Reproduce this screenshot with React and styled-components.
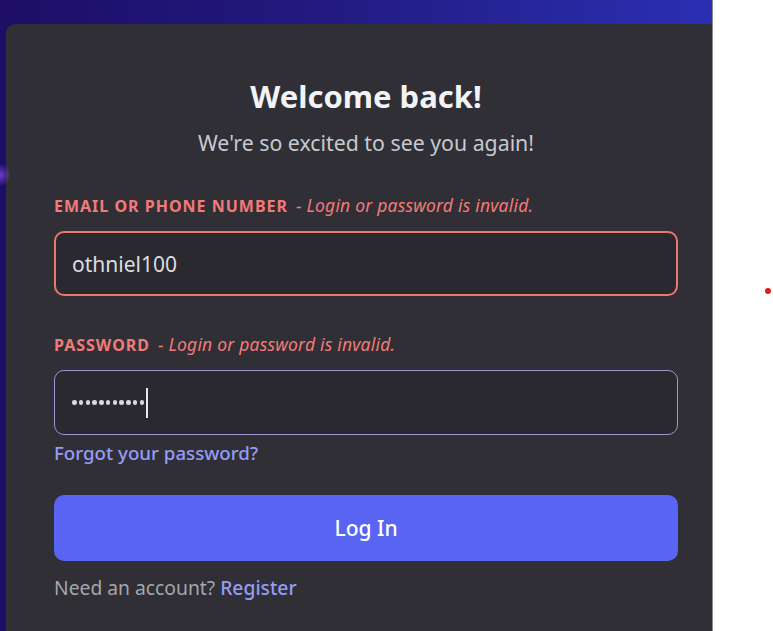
import React from "react";
import styled, { createGlobalStyle } from "styled-components";

const Global = createGlobalStyle`
  html, body { margin: 0; padding: 0; background: #ffffff; overflow: hidden; }
  * { box-sizing: border-box; }
`;

const Page = styled.div`
  display: flex;
  width: 773px;
  height: 631px;
  font-family: "Noto Sans", "Open Sans", sans-serif;
`;

const Backdrop = styled.div`
  position: relative;
  width: 713px;
  flex: none;
  display: flex;
  padding: 24px 0 0 6px;
  background: linear-gradient(90deg, #1d0d66 0%, #221a80 45%, #2a2fb2 100%);
  border-right: 1px solid #8c8c92;
  overflow: hidden;
  &::before {
    content: "";
    position: absolute;
    left: -10px;
    top: 162px;
    width: 20px;
    height: 26px;
    border-radius: 50%;
    background: radial-gradient(circle, rgba(140, 80, 255, 0.7), rgba(140, 80, 255, 0) 70%);
  }
`;

const Card = styled.main`
  flex: 1;
  background: #2f2f35;
  border-radius: 9px 0 0 0;
  padding: 48px 34px 0 48px;
  display: flex;
  flex-direction: column;
`;

const Title = styled.h1`
  margin: 6px 0 0;
  text-align: center;
  color: #f2f3f5;
  font-size: 31px;
  line-height: 36px;
  font-weight: 700;
`;

const Subtitle = styled.p`
  margin: 16px 0 0;
  text-align: center;
  color: #c7c9cf;
  font-size: 21.3px;
  line-height: 26px;
`;

const Field = styled.div`
  display: flex;
  flex-direction: column;
  margin-top: ${(p) => p.$top}px;
`;

const Label = styled.label`
  display: flex;
  align-items: baseline;
  gap: 8px;
  color: #f27a78;
  font-size: 16px;
  line-height: 20px;
  font-weight: 700;
  letter-spacing: 1px;
  text-transform: uppercase;
  margin-bottom: 15px;
`;

const ErrorText = styled.span`
  font-style: italic;
  font-weight: 400;
  font-size: 17.5px;
  text-transform: none;
  letter-spacing: 0.2px;
`;

const Input = styled.div`
  height: 65px;
  border-radius: 10px;
  background: #29292f;
  border: ${(p) => (p.$error ? "2px solid #f07470" : "1px solid #9d97d4")};
  padding: 0 ${(p) => (p.$error ? 16 : 17)}px;
  display: flex;
  align-items: center;
  color: #dcdde2;
  font-size: 21px;
`;

const Dots = styled.span`
  display: flex;
  align-items: center;
  gap: 2.25px;
`;

const Dot = styled.span`
  width: 4.5px;
  height: 4.5px;
  border-radius: 50%;
  background: #d8d9de;
`;

const Caret = styled.span`
  width: 2px;
  height: 30px;
  background: #e8e8ea;
  margin-left: 1.5px;
`;

const Link = styled.a`
  color: #949cf7;
  text-decoration: none;
  font-weight: 500;
`;

const Forgot = styled(Link)`
  margin-top: 6px;
  font-size: 18.7px;
  line-height: 24px;
  align-self: flex-start;
`;

const Button = styled.button`
  margin-top: 30px;
  height: 66px;
  border: none;
  border-radius: 10px;
  background: #5865f2;
  color: #ffffff;
  font-family: inherit;
  font-size: 21px;
  font-weight: 500;
  cursor: pointer;
`;

const Footer = styled.p`
  margin: 15px 0 0;
  color: #a4a6ad;
  font-size: 19.3px;
  line-height: 24px;
`;

const Side = styled.div`
  flex: 1;
  position: relative;
  background: #ffffff;
`;

const RedDot = styled.span`
  position: absolute;
  left: 52px;
  top: 288px;
  width: 6px;
  height: 6px;
  border-radius: 50%;
  background: #e51b1b;
`;

export default function App() {
  return (
    <>
      <Global />
      <Page>
        <Backdrop>
          <Card>
            <Title>Welcome back!</Title>
            <Subtitle>We're so excited to see you again!</Subtitle>
            <Field $top={39}>
              <Label>
                Email or Phone Number
                <ErrorText>- Login or password is invalid.</ErrorText>
              </Label>
              <Input $error>othniel100</Input>
            </Field>
            <Field $top={38}>
              <Label>
                Password
                <ErrorText>- Login or password is invalid.</ErrorText>
              </Label>
              <Input>
                <Dots>
                  {Array.from({ length: 11 }).map((_, i) => (
                    <Dot key={i} />
                  ))}
                </Dots>
                <Caret />
              </Input>
              <Forgot href="#">Forgot your password?</Forgot>
            </Field>
            <Button>Log In</Button>
            <Footer>
              Need an account? <Link href="#">Register</Link>
            </Footer>
          </Card>
        </Backdrop>
        <Side>
          <RedDot />
        </Side>
      </Page>
    </>
  );
}
